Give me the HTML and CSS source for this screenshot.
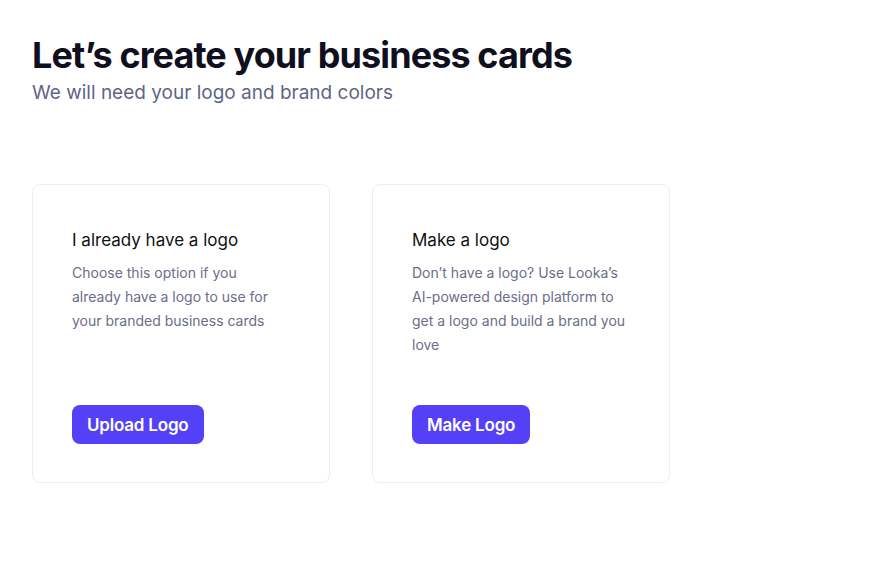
FILE: index.html
```html
<!DOCTYPE html>
<html lang="en">
<head>
    <meta charset="UTF-8">
    <meta name="viewport" content="width=device-width, initial-scale=1.0">
    <title>Business Cards</title>
    <link rel="stylesheet" href="styles.css">
</head>
<body>
    <div class="page">
        <div class="intro">
            <h1>Let’s create your business cards</h1>
            <p class="subtitle">We will need your logo and brand colors</p>
        </div>

        <div class="options">
            <div class="card">
                <h3>I already have a logo</h3>
                <p>Choose this option if you already have a logo to use for your branded business cards</p>
                <button type="button">Upload Logo</button>
            </div>

            <div class="card">
                <h3>Make a logo</h3>
                <p>Don’t have a logo? Use Looka’s AI-powered design platform to get a logo and build a brand you love</p>
                <button type="button">Make Logo</button>
            </div>
        </div>
    </div>
</body>
</html>
```

FILE: styles.css
```css
body {
    font-family: Inter, "Noto Sans", sans-serif;
    margin: 0;
    padding: 0;
    background-color: #fff;
    color: #0f0f1e;
}
.page {
    padding: 33px 32px;
}
.intro h1 {
    font-size: 36px;
    font-weight: 700;
    letter-spacing: -0.9px;
    line-height: 44px;
    margin: 0;
}
.intro .subtitle {
    font-size: 19px;
    color: #5f6585;
    line-height: 22px;
    margin: 5px 0 0;
}
.options {
    display: flex;
    gap: 42px;
    margin-top: 80px;
}
.card {
    width: 298px;
    height: 299px;
    box-sizing: border-box;
    border: 1px solid #eeeef2;
    border-radius: 8px;
    padding: 44px 41px 0 39px;
    display: flex;
    flex-direction: column;
}
.card h3 {
    font-size: 17px;
    font-weight: 400;
    line-height: 22px;
    margin: 0 0 10px;
    color: #111;
}
.card p {
    font-size: 14px;
    line-height: 24px;
    color: #6b6e88;
    margin: 0;
    height: 144px;
}
.card button {
    align-self: flex-start;
    background: #5440f7;
    color: #fff;
    border: none;
    border-radius: 8px;
    font-family: inherit;
    font-size: 17px;
    font-weight: 600;
    height: 39px;
    padding: 0 15px;
    letter-spacing: -0.2px;
}
```
